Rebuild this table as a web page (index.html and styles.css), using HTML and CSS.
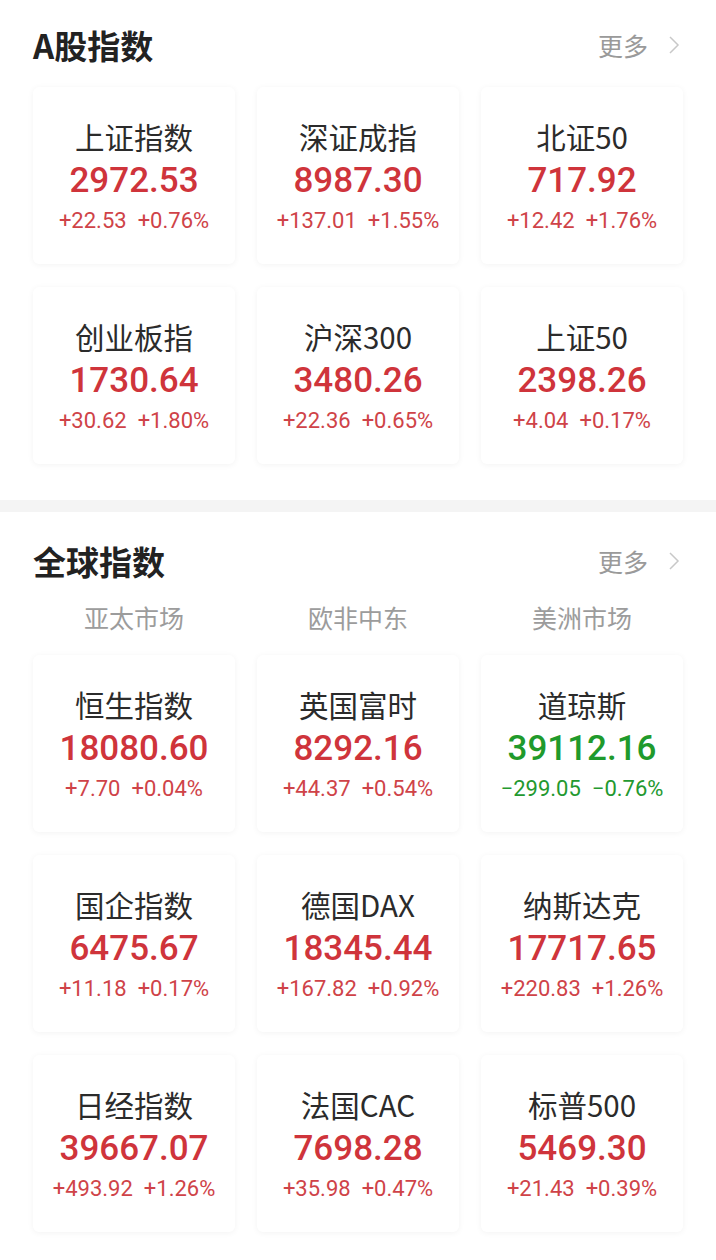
FILE: index.html
```html
<!DOCTYPE html>
<html lang="zh-CN">
<head>
<meta charset="utf-8">
<title>指数</title>
<link rel="stylesheet" href="styles.css">
</head>
<body>
<section class="block block-a">
  <div class="head">
    <h2 class="title">A股指数</h2>
    <a class="more">更多<svg class="chev" width="12" height="20" viewBox="0 0 12 20"><path d="M2 2 L10 10 L2 18" fill="none" stroke="#c8c8c8" stroke-width="1.5"/></svg></a>
  </div>
  <div class="grid">
    <div class="card up"><div class="name">上证指数</div><div class="num">2972.53</div><div class="chg"><span>+22.53</span><span>+0.76%</span></div></div>
    <div class="card up"><div class="name">深证成指</div><div class="num">8987.30</div><div class="chg"><span>+137.01</span><span>+1.55%</span></div></div>
    <div class="card up"><div class="name">北证50</div><div class="num">717.92</div><div class="chg"><span>+12.42</span><span>+1.76%</span></div></div>
    <div class="card up"><div class="name">创业板指</div><div class="num">1730.64</div><div class="chg"><span>+30.62</span><span>+1.80%</span></div></div>
    <div class="card up"><div class="name">沪深300</div><div class="num">3480.26</div><div class="chg"><span>+22.36</span><span>+0.65%</span></div></div>
    <div class="card up"><div class="name">上证50</div><div class="num">2398.26</div><div class="chg"><span>+4.04</span><span>+0.17%</span></div></div>
  </div>
</section>
<div class="sep"></div>
<section class="block block-b">
  <div class="head">
    <h2 class="title">全球指数</h2>
    <a class="more">更多<svg class="chev" width="12" height="20" viewBox="0 0 12 20"><path d="M2 2 L10 10 L2 18" fill="none" stroke="#c8c8c8" stroke-width="1.5"/></svg></a>
  </div>
  <div class="regions">
    <div>亚太市场</div><div>欧非中东</div><div>美洲市场</div>
  </div>
  <div class="grid">
    <div class="card up"><div class="name">恒生指数</div><div class="num">18080.60</div><div class="chg"><span>+7.70</span><span>+0.04%</span></div></div>
    <div class="card up"><div class="name">英国富时</div><div class="num">8292.16</div><div class="chg"><span>+44.37</span><span>+0.54%</span></div></div>
    <div class="card down"><div class="name">道琼斯</div><div class="num">39112.16</div><div class="chg"><span>−299.05</span><span>−0.76%</span></div></div>
    <div class="card up"><div class="name">国企指数</div><div class="num">6475.67</div><div class="chg"><span>+11.18</span><span>+0.17%</span></div></div>
    <div class="card up"><div class="name">德国DAX</div><div class="num">18345.44</div><div class="chg"><span>+167.82</span><span>+0.92%</span></div></div>
    <div class="card up"><div class="name">纳斯达克</div><div class="num">17717.65</div><div class="chg"><span>+220.83</span><span>+1.26%</span></div></div>
    <div class="card up"><div class="name">日经指数</div><div class="num">39667.07</div><div class="chg"><span>+493.92</span><span>+1.26%</span></div></div>
    <div class="card up"><div class="name">法国CAC</div><div class="num">7698.28</div><div class="chg"><span>+35.98</span><span>+0.47%</span></div></div>
    <div class="card up"><div class="name">标普500</div><div class="num">5469.30</div><div class="chg"><span>+21.43</span><span>+0.39%</span></div></div>
  </div>
</section>
</body>
</html>
```

FILE: styles.css
```css
* { box-sizing: border-box; }
html, body {
  margin: 0;
  padding: 0;
  background: #ffffff;
  font-family: "Noto Sans CJK SC", "Noto Sans", sans-serif;
  width: 716px;
}
.block { padding: 0 33px; }
.block-a { padding-top: 15px; padding-bottom: 36px; }
.block-a .grid { margin-top: 12px; }
.block-b { padding-top: 19px; padding-bottom: 30px; }
.head {
  height: 60px;
  display: flex;
  align-items: center;
  justify-content: space-between;
}
.title {
  margin: 0;
  font-size: 33px;
  font-weight: 700;
  color: #222222;
  line-height: 1;
}
.more {
  display: flex;
  align-items: center;
  gap: 20px;
  font-size: 25px;
  color: #9a9a9a;
  padding-right: 3px;
}
.chev { display: block; }
.sep { height: 12px; background: #f4f4f4; }
.regions {
  display: grid;
  grid-template-columns: repeat(3, 1fr);
  column-gap: 22px;
  height: 52px;
  align-items: center;
  text-align: center;
  font-size: 25px;
  color: #9c9c9c;
  margin-bottom: 12px;
}
.grid {
  display: grid;
  grid-template-columns: repeat(3, 1fr);
  column-gap: 22px;
  row-gap: 23px;
}
.card {
  height: 177px;
  background: #ffffff;
  border-radius: 6px;
  box-shadow: 0 1px 6px rgba(0, 0, 0, 0.05);
  display: flex;
  flex-direction: column;
  align-items: center;
  padding-top: 31px;
}
.name {
  font-size: 29.5px;
  line-height: 36px;
  color: #2b2b2b;
}
.num {
  font-family: "Roboto", "Noto Sans", sans-serif;
  font-weight: 500;
  font-size: 35px;
  line-height: 42px;
  margin-top: 6px;
}
.chg {
  font-family: "Roboto", "Noto Sans", sans-serif;
  font-size: 22px;
  line-height: 28px;
  margin-top: 5px;
  display: flex;
  gap: 11px;
}
.up .num { color: #cf343b; }
.up .chg { color: #cf4348; }
.down .num { color: #1f9a2c; }
.down .chg { color: #23992f; }
```
